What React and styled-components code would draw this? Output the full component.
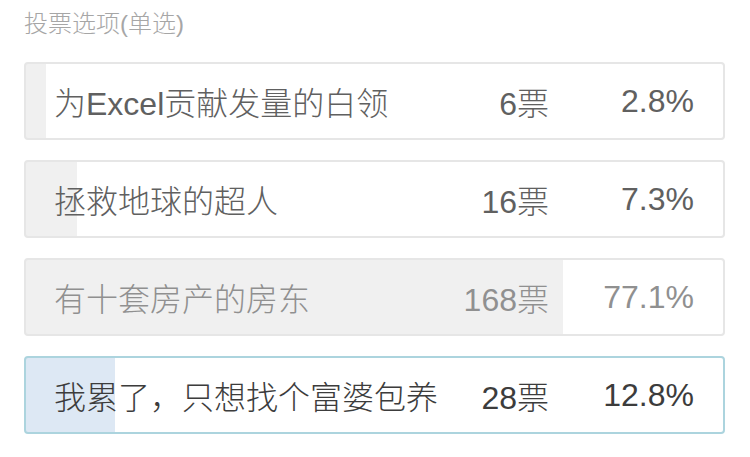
import styled, { createGlobalStyle } from 'styled-components';

const GlobalStyle = createGlobalStyle`
  html, body {
    margin: 0;
    padding: 0;
    background: #ffffff;
  }
  body {
    font-family: "Liberation Sans", "Noto Sans CJK SC", sans-serif;
    font-weight: 300;
  }
`;

const Poll = styled.section`
  padding: 12px 0 0 24px;
  width: 701px;
`;

const Heading = styled.h2`
  color: #a6a6a6;
  font-size: 24px;
  font-weight: 300;
  line-height: 24px;
  margin: 0 0 26px;
`;

const OptionList = styled.ul`
  display: flex;
  flex-direction: column;
  gap: 20px;
  list-style: none;
  margin: 0;
  padding: 0;
`;

const themes = {
  normal: { fill: '#f0f0f0', border: '#e6e6e6', color: '#606060' },
  leading: { fill: '#f0f0f0', border: '#e6e6e6', color: '#909090' },
  mine: { fill: '#dde8f4', border: '#acd4de', color: '#3c3c3c' },
};

const Option = styled.li`
  align-items: center;
  background: ${({ $pct, $kind }) =>
    `linear-gradient(to right, ${themes[$kind].fill} ${$pct}%, #ffffff ${$pct}%)`};
  border: 2px solid ${({ $kind }) => themes[$kind].border};
  border-radius: 4px;
  box-sizing: border-box;
  color: ${({ $kind }) => themes[$kind].color};
  display: grid;
  font-size: 32px;
  grid-template-columns: 1fr auto 145px;
  height: 78px;
  padding: 0 29px 0 28px;
`;

const Label = styled.span`
  white-space: nowrap;
`;

const Votes = styled.span`
  text-align: right;
  white-space: nowrap;
`;

const Percent = styled.span`
  text-align: right;
  white-space: nowrap;
`;

const options = [
  { label: '为Excel贡献发量的白领', votes: 6, pct: 2.8, kind: 'normal' },
  { label: '拯救地球的超人', votes: 16, pct: 7.3, kind: 'normal' },
  { label: '有十套房产的房东', votes: 168, pct: 77.1, kind: 'leading' },
  { label: '我累了，只想找个富婆包养', votes: 28, pct: 12.8, kind: 'mine' },
];

const App = () => (
  <>
    <GlobalStyle />
    <Poll>
      <Heading>投票选项(单选)</Heading>
      <OptionList>
        {options.map((o) => (
          <Option key={o.label} $pct={o.pct} $kind={o.kind}>
            <Label>{o.label}</Label>
            <Votes>{o.votes}票</Votes>
            <Percent>{o.pct}%</Percent>
          </Option>
        ))}
      </OptionList>
    </Poll>
  </>
);

export default App;
